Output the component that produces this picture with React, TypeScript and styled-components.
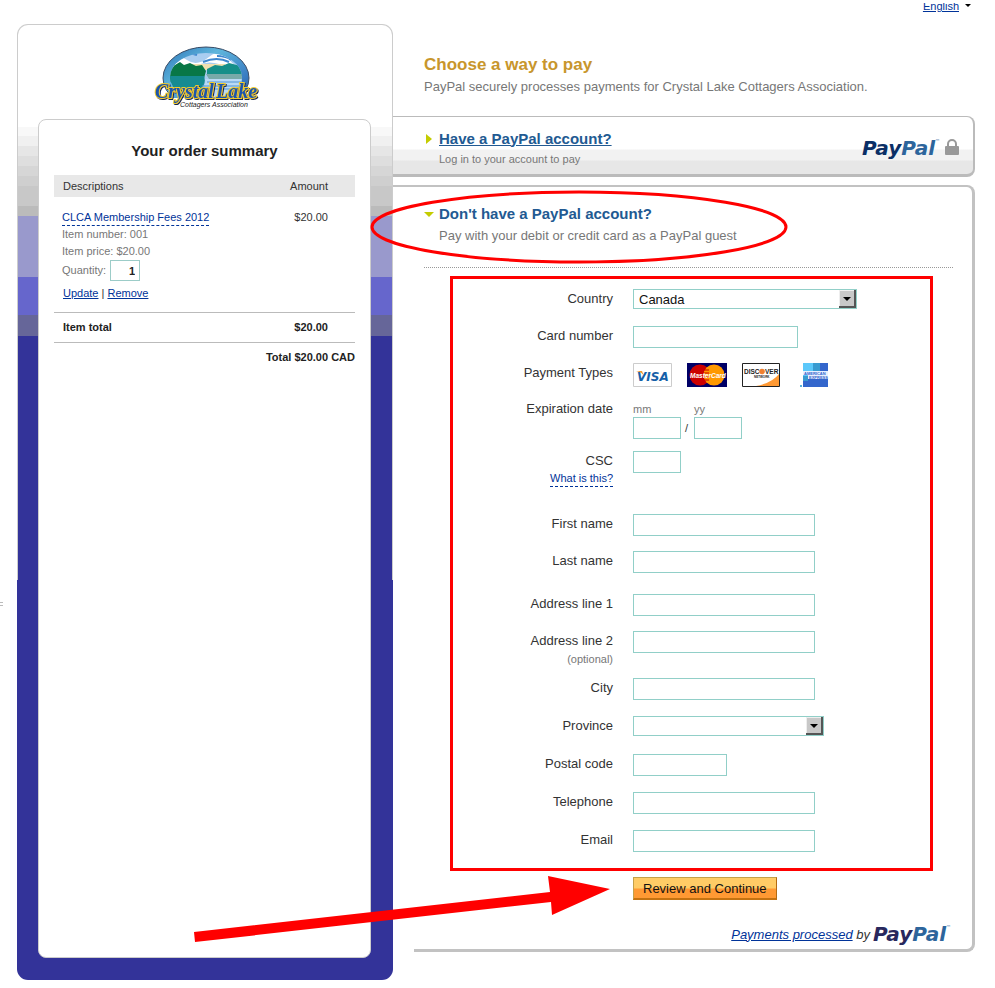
import React from 'react';
import styled, { createGlobalStyle } from 'styled-components';

const GlobalStyle = createGlobalStyle`
  * { box-sizing: border-box; }
  body {
    margin: 0;
    background: #fff;
    color: #333;
    font-family: "Liberation Sans", Arial, sans-serif;
    font-size: 13px;
  }
  input, select, button { font: inherit; color: inherit; border-radius: 0; }
  h1, h2, p { margin: 0; }
`;

const Page = styled.div`
  position: relative;
  padding: 3px 20px 10px 17px;
`;

const TopBar = styled.header`
  display: flex;
  justify-content: flex-end;
  align-items: flex-end;
  height: 9px;
  margin-bottom: 12px;
  overflow: hidden;
`;

const Language = styled.a`
  display: flex;
  align-items: center;
  gap: 6px;
  margin-right: 4px;
  color: #039;
  font-size: 11px;
  line-height: 12px;
`;

const Columns = styled.div`
  display: flex;
  align-items: stretch;
`;

const Sidebar = styled.aside`
  display: flex;
  flex-direction: column;
  flex: none;
  width: 376px;
  padding: 20px 21px 21px 20px;
  border: 1px solid transparent;
  border-radius: 11px;
  background:
    linear-gradient(
      to bottom,
      #fff 0 102px, #f8f8f8 102px 111px, #f0f0f0 111px 121px, #e6e6e6 121px 131px,
      #dedede 131px 141px, #d6d6d6 141px 151px, #cfcfcf 151px 161px, #c8c8c8 161px 181px,
      #bbb 181px 191px, #99c 191px 252px, #66c 252px 290px, #669 290px 311px, #339 311px
    ) padding-box,
    linear-gradient(to bottom, #ccc 0 556px, #339 556px) border-box;
`;

const BrandLogo = styled.svg`
  display: block;
  align-self: center;
  width: 108px;
  height: 68px;
  margin-bottom: 6px;
  margin-left: 4px;
`;

const Summary = styled.section`
  flex: 1;
  padding: 22px 15px 20px;
  border: 1px solid #ccc;
  border-radius: 8px;
  background: #fff;
`;

const SummaryTitle = styled.h2`
  margin-bottom: 15px;
  text-align: center;
  color: #222;
  font-size: 15px;
  line-height: 18px;
`;

const OrderTable = styled.table`
  width: 100%;
  border-collapse: collapse;
  font-size: 11px;
  line-height: 17px;

  th, td { padding: 0; text-align: left; vertical-align: top; }
  th:last-child, td:last-child { text-align: right; padding-right: 27px; }
  thead th { background: #e8e8e8; font-weight: normal; line-height: 22px; }
  thead th:first-child, tfoot th:first-child { padding-left: 9px; }
  tbody td { padding-top: 12px; }
  tbody td:first-child { padding: 12px 0 7px 8px; }
  tfoot th, tfoot td {
    height: 30px;
    border-top: 1px solid #bbb;
    font-weight: bold;
    line-height: 29px;
    color: #222;
  }
  tfoot tr:last-child td { padding-right: 0; }
`;

const Detail = styled.div`
  display: flex;
  align-items: center;
  gap: 4px;
  color: #777;
`;

const DashedLink = styled.a`
  display: inline-block;
  color: #039;
  text-decoration: none;
  font-size: 11px;
  line-height: 15px;
  border-bottom: 1px dashed #039;
`;

const QuantityInput = styled.input`
  width: 30px;
  height: 21px;
  padding: 0 4px;
  border: 1px solid #9cccc8;
  background: #fff;
  color: #222;
  font-weight: bold;
  text-align: right;
`;

const Actions = styled.div`
  padding-left: 1px;
  line-height: 24px;
  a { color: #039; }
`;

const Main = styled.main`
  flex: 1;
  min-width: 0;
  margin-bottom: 28px;
`;

const Intro = styled.div`
  padding: 30px 31px 19px;
`;

const Title = styled.h1`
  color: #c8962c;
  font-size: 17px;
  line-height: 22px;
`;

const Muted = styled.p<{ $small?: boolean }>`
  color: #777;
  font-size: ${(p) => (p.$small ? 11 : 13)}px;
  line-height: ${(p) => (p.$small ? 18 : 21)}px;
`;

const LoginBar = styled.section`
  display: flex;
  align-items: center;
  justify-content: space-between;
  height: 61px;
  margin-bottom: 8px;
  padding: 4px 14px 0 31px;
  border: solid #bbb;
  border-width: 1px 2px 3px 0;
  border-radius: 0 8px 8px 0;
  background: linear-gradient(to bottom, #fff 0 32px, #f2f2f2 33px 43px, #e7e7e7 44px);
`;

const Option = styled.div`
  display: grid;
  grid-template-columns: 15px auto;
  align-items: center;
`;

const OptionTitle = styled.h2`
  color: #225a92;
  font-size: 15px;
  line-height: 22px;
  a { color: inherit; }
`;

const OptionText = styled.div`
  grid-column: 2;
`;

const LogoRow = styled.div`
  display: flex;
  align-items: center;
  gap: 5px;
`;

const PayPalMark = styled.span<{ $first: string }>`
  display: inline-flex;
  color: ${(p) => p.$first};
  font-family: "DejaVu Sans", Verdana, sans-serif;
  font-size: 20px;
  font-style: italic;
  font-weight: bold;
  line-height: 26px;
  b { color: #2d659c; }
  sup { color: #2d659c; font-size: 5px; line-height: 12px; font-weight: 400; font-style: normal; }
`;

const GuestPanel = styled.section`
  position: relative;
  border: solid #c2c2c2;
  border-width: 2px 3px 0 0;
  border-radius: 0 8px 0 0;
`;

const GuestHead = styled.div`
  margin: 0 19px 8px 31px;
  padding: 16px 0 21px;
  border-bottom: 1px dotted #999;
`;

const HighlightRing = styled.svg`
  position: absolute;
  top: 1px;
  left: -24px;
  width: 420px;
  height: 76px;
  pointer-events: none;
`;

const HighlightArrow = styled.svg`
  position: absolute;
  left: -203px;
  bottom: -45px;
  width: 424px;
  height: 76px;
  pointer-events: none;
`;

const PaymentForm = styled.form`
  display: block;
`;

const FormBox = styled.div`
  margin: 0 39px 6px 57px;
  padding: 10px 0 1px;
  border: 3px solid #f00;
`;

const Group = styled.div<{ $after?: number; $gap?: number }>`
  display: grid;
  row-gap: ${(p) => p.$gap ?? 0}px;
  margin-bottom: ${(p) => p.$after ?? 0}px;
`;

const Row = styled.div`
  display: grid;
  grid-template-columns: 160px 1fr;
  column-gap: 20px;
  align-items: start;
  min-height: 37px;
`;

const LabelCell = styled.div`
  display: flex;
  flex-direction: column;
  align-items: flex-end;
`;

const FieldLabel = styled.label<{ $tight?: boolean }>`
  line-height: ${(p) => (p.$tight ? 14 : 20)}px;
`;

const Optional = styled.small`
  color: #777;
  font-size: 11px;
  line-height: 16px;
`;

const TextInput = styled.input<{ $width: number }>`
  width: ${(p) => p.$width}px;
  max-width: 100%;
  height: 22px;
  padding: 0 4px;
  border: 1px solid #91cfc8;
  background: #fff;
`;

const SelectWrap = styled.div<{ $width: number }>`
  display: grid;
  align-items: center;
  justify-items: end;
  width: ${(p) => p.$width}px;
  max-width: 100%;
  > * { grid-area: 1 / 1; }
`;

const Select = styled.select`
  width: 100%;
  height: 20px;
  padding: 0 20px 0 5px;
  border: 1px solid #91cfc8;
  background: #fff;
  color: #111;
  appearance: none;
`;

const SelectArrow = styled.svg`
  width: 17px;
  height: 18px;
  margin-right: 1px;
  pointer-events: none;
`;

const Cards = styled.div`
  display: flex;
  gap: 15px;
  svg { display: block; height: 24px; }
`;

const DateFields = styled.div`
  display: flex;
  align-items: flex-end;
  gap: 4px;
`;

const DateField = styled.label`
  display: grid;
  color: #777;
  font-size: 11px;
  line-height: 15px;
`;

const Slash = styled.span`
  width: 5px;
  font-size: 11px;
  line-height: 22px;
`;

const SubmitButton = styled.button`
  display: block;
  height: 23px;
  margin-left: 240px;
  padding: 0 9px;
  border: 1px solid #c4a14a;
  border-right-color: #b26b12;
  border-bottom: 2px solid #c47210;
  background: linear-gradient(to bottom, #fc6 0 10px, #f93 11px);
  color: #111;
  cursor: pointer;
`;

const PanelFoot = styled.footer`
  display: flex;
  justify-content: flex-end;
  align-items: center;
  gap: 3px;
  margin-left: 21px;
  padding: 21px 21px 2px 0;
  border: solid #c2c2c2;
  border-width: 0 3px 3px 0;
  border-radius: 0 0 8px 0;
  font-style: italic;
  a { color: #039; }
`;

const EdgeMark = styled.span`
  position: absolute;
  left: 0;
  top: 602px;
  width: 3px;
  height: 4px;
  border: solid #bbb;
  border-width: 1px 0;
`;

const PayPal = ({ first = '#0b2f66' }: { first?: string }) => (
  <PayPalMark $first={first}>
    Pay<b>Pal</b><sup>™</sup>
  </PayPalMark>
);

const scriptFont = {
  fontFamily: 'Liberation Serif, serif',
  fontSize: 20,
  fontStyle: 'italic',
  fontWeight: 'bold',
  fill: '#1c54ac',
  stroke: '#f2cb2c',
  strokeWidth: 2,
  paintOrder: 'stroke',
} as const;

const CrystalLogo = () => (
  <BrandLogo viewBox="0 0 108 68" role="img" aria-label="Crystal Lake Cottagers Association">
    <defs>
      <clipPath id="lake"><ellipse cx="53" cy="32" rx="36" ry="24" /></clipPath>
      <clipPath id="frame"><path d="M0 0h108v53H0z" /></clipPath>
      <linearGradient id="ring" x1="0" y1="0" x2="1" y2="1">
        <stop offset="0" stopColor="#2a72b8" />
        <stop offset=".35" stopColor="#5fb6dc" />
        <stop offset=".7" stopColor="#3b7fc4" />
        <stop offset="1" stopColor="#234f94" />
      </linearGradient>
      <filter id="edge" x="-10%" y="-20%" width="120%" height="150%">
        <feDropShadow dx="1" dy="1" stdDeviation="0" floodColor="#16264f" />
      </filter>
    </defs>
    <g clipPath="url(#frame)">
      <ellipse cx="53" cy="33" rx="43" ry="31" fill="url(#ring)" stroke="#3a4c66" />
      <g clipPath="url(#lake)">
        <rect width="108" height="60" fill="#a9cdf0" />
        <path d="M10 15q14-7 24 0t22-3 20 2 16 0v4q-14 5-26 1t-24 2-32-1z" fill="#fff" />
        <path d="M20 11q14-5 24-1M50 17q14-6 26 0M64 11q10 0 14 4" stroke="#3f88cf" strokeWidth="2" fill="none" />
        <path d="M36 19h36v6H36z" fill="#f1dfae" />
        <path d="M10 22l8-4 4 2 5-3 4 3 6-2 6 3 6-1 4 6-3 11H10z" fill="#087746" />
        <path d="M54 24l8-4 7 1 7-3 8 2 8 1v10H54z" fill="#168f89" />
        <path d="M53 29h40v5H56z" fill="#78aaa9" />
        <path d="M10 31h41q3 9-5 14-8 4-36 2z" fill="#168b91" />
        <path d="M52 34h40v20H44q10-12 8-20z" fill="#badaf5" />
        <path d="M54 37h34M49 41h40M59 44h30" stroke="#5394d4" />
      </g>
    </g>
    <g filter="url(#edge)">
      <text x="2" y="53" {...scriptFont}>Crystal</text>
      <text x="63" y="53" {...scriptFont}>Lake</text>
    </g>
    <text x="27" y="62" fontFamily="Liberation Sans, sans-serif" fontSize="7" fontStyle="italic" fill="#222">Cottagers Association</text>
  </BrandLogo>
);

const DropArrow = () => (
  <SelectArrow viewBox="0 0 17 18" aria-hidden="true">
    <path d="M0 0h17v18H0z" fill="#555" />
    <path d="M0 0h15v16H0z" fill="#eee" />
    <path d="M1 1h14v15H1z" fill="#c8c8c8" />
    <path d="M4 7h8l-4 4z" fill="#000" />
  </SelectArrow>
);

const PaymentTypes = () => (
  <Cards>
    <svg width="39" viewBox="0 0 39 24" role="img" aria-label="Visa">
      <path d="M.5.5h38v23H.5z" fill="#fff" stroke="#ccc" />
      <text x="4" y="18" fontFamily="DejaVu Sans, sans-serif" fontStyle="italic" fontWeight="bold" fontSize="12" fill="#1560a8">VISA</text>
      <path d="M3 8h6l2 5q-2-4-8-5z" fill="#f39a2b" />
    </svg>
    <svg width="40" viewBox="0 0 40 24" role="img" aria-label="MasterCard">
      <path d="M0 0h40v24H0z" fill="#006" />
      <circle cx="13" cy="12" r="10.5" fill="#c00" />
      <circle cx="27" cy="12" r="10.5" fill="#f90" />
      <path d="M17 7h5M17 10h5M17 14h5M17 17h5" stroke="#c00" />
      <text x="3" y="15" fontFamily="Liberation Sans, sans-serif" fontStyle="italic" fontWeight="bold" fontSize="6.5" fill="#fff">MasterCard</text>
    </svg>
    <svg width="38" viewBox="0 0 38 24" role="img" aria-label="Discover Network">
      <path d="M.5.5h37v23H.5z" fill="#fff" />
      <path d="M14 23q16-3 23-12v12z" fill="#f93" />
      <path d="M.5.5h37v23H.5z" fill="none" stroke="#222" />
      <text x="2" y="11" fontFamily="Liberation Sans, sans-serif" fontWeight="bold" fontSize="6.5" fill="#222">DISC</text>
      <circle cx="20" cy="8.500" r="2.800" fill="#f08030" />
      <text x="23" y="11" fontFamily="Liberation Sans, sans-serif" fontWeight="bold" fontSize="6.5" fill="#222">VER</text>
      <text x="12" y="15" fontFamily="Liberation Sans, sans-serif" fontWeight="bold" fontSize="3" fill="#222">NETWORK</text>
    </svg>
    <svg width="34" viewBox="0 0 34 24" role="img" aria-label="American Express">
      <path d="M8 0h25v24H8z" fill="#36c" />
      <path d="M8 0h10v16H8z" fill="#5cc8fa" />
      <path d="M18 0h7v8h-7zM8 13h5v5H8z" fill="#399bd0" />
      <path d="M8 8h25v4H8zM13 12h20v4H13z" fill="#e8f0ff" />
      <text x="9" y="12" fontFamily="Liberation Sans, sans-serif" fontWeight="bold" fontSize="4" fill="#36c">AMERICAN</text>
      <text x="14" y="16" fontFamily="Liberation Sans, sans-serif" fontWeight="bold" fontSize="4" fill="#36c">EXPRESS</text>
      <circle cx="6" cy="23" r="1" fill="#29c" />
    </svg>
  </Cards>
);

type FieldProps = { id: string; label: string; width: number; type?: string; optional?: boolean };

const Field = ({ id, label, width, type = 'text', optional }: FieldProps) => (
  <Row>
    <LabelCell>
      <FieldLabel htmlFor={id}>{label}</FieldLabel>
      {optional && <Optional>(optional)</Optional>}
    </LabelCell>
    <TextInput id={id} type={type} $width={width} />
  </Row>
);

const OrderSummary = () => (
  <Summary>
    <SummaryTitle>Your order summary</SummaryTitle>
    <OrderTable>
      <thead>
        <tr><th scope="col">Descriptions</th><th scope="col">Amount</th></tr>
      </thead>
      <tbody>
        <tr>
          <td>
            <DashedLink href="#item">CLCA Membership Fees 2012</DashedLink>
            <Detail>Item number: 001</Detail>
            <Detail>Item price: $20.00</Detail>
            <Detail>
              <label htmlFor="quantity">Quantity:</label>
              <QuantityInput id="quantity" defaultValue="1" />
            </Detail>
            <Actions><a href="#update">Update</a> | <a href="#remove">Remove</a></Actions>
          </td>
          <td>$20.00</td>
        </tr>
      </tbody>
      <tfoot>
        <tr><th scope="row">Item total</th><td>$20.00</td></tr>
        <tr><td colSpan={2}>Total $20.00 CAD</td></tr>
      </tfoot>
    </OrderTable>
  </Summary>
);

export default function App() {
  return (
    <Page>
      <GlobalStyle />
      <TopBar>
        <Language href="#language">
          English
          <svg width="6" height="4" viewBox="0 0 6 4" aria-hidden="true"><path d="M0 0h6L3 3z" fill="#000" /></svg>
        </Language>
      </TopBar>
      <Columns>
        <Sidebar>
          <CrystalLogo />
          <OrderSummary />
        </Sidebar>
        <Main>
          <Intro>
            <Title>Choose a way to pay</Title>
            <Muted>PayPal securely processes payments for Crystal Lake Cottagers Association.</Muted>
          </Intro>
          <LoginBar>
            <Option>
              <svg width="8" height="10" viewBox="0 0 8 10" aria-hidden="true"><path d="M2 0l6 5-6 5z" fill="#c4cc00" /></svg>
              <OptionTitle><a href="#login">Have a PayPal account?</a></OptionTitle>
              <OptionText><Muted $small>Log in to your account to pay</Muted></OptionText>
            </Option>
            <LogoRow>
              <PayPal />
              <svg width="14" height="17" viewBox="0 0 14 17" aria-hidden="true">
                <path d="M3 8V5a4 4 0 0 1 8 0v3" fill="none" stroke="#999" strokeWidth="2" />
                <rect y="7" width="14" height="9" rx="1" fill="#999" />
              </svg>
            </LogoRow>
          </LoginBar>
          <GuestPanel>
            <GuestHead>
              <Option>
                <svg width="10" height="5" viewBox="0 0 10 5" aria-hidden="true"><path d="M0 0h10L5 5z" fill="#c4cc00" /></svg>
                <OptionTitle>Don't have a PayPal account?</OptionTitle>
                <OptionText><Muted>Pay with your debit or credit card as a PayPal guest</Muted></OptionText>
              </Option>
            </GuestHead>
            <PaymentForm>
              <FormBox>
                <Group $after={2}>
                  <Row>
                    <LabelCell><FieldLabel htmlFor="country">Country</FieldLabel></LabelCell>
                    <SelectWrap $width={224}>
                      <Select id="country" defaultValue="Canada"><option>Canada</option></Select>
                      <DropArrow />
                    </SelectWrap>
                  </Row>
                  <Field id="card" label="Card number" width={165} />
                  <Row>
                    <LabelCell><FieldLabel as="span">Payment Types</FieldLabel></LabelCell>
                    <PaymentTypes />
                  </Row>
                </Group>
                <Group $after={12}>
                  <Row>
                    <LabelCell><FieldLabel as="span" $tight>Expiration date</FieldLabel></LabelCell>
                    <DateFields>
                      <DateField>mm<TextInput $width={48} /></DateField>
                      <Slash>/</Slash>
                      <DateField>yy<TextInput $width={48} /></DateField>
                    </DateFields>
                  </Row>
                </Group>
                <Group $after={26}>
                  <Row>
                    <LabelCell>
                      <FieldLabel htmlFor="csc">CSC</FieldLabel>
                      <DashedLink href="#csc-help">What is this?</DashedLink>
                    </LabelCell>
                    <TextInput id="csc" $width={48} />
                  </Row>
                </Group>
                <Group $after={6}>
                  <Field id="first" label="First name" width={182} />
                  <Field id="last" label="Last name" width={182} />
                </Group>
                <Group $after={10}>
                  <Field id="address1" label="Address line 1" width={182} />
                  <Field id="address2" label="Address line 2" width={182} optional />
                </Group>
                <Group $gap={1}>
                  <Field id="city" label="City" width={182} />
                  <Row>
                    <LabelCell><FieldLabel htmlFor="province">Province</FieldLabel></LabelCell>
                    <SelectWrap $width={191}>
                      <Select id="province" defaultValue=""><option value="" /></Select>
                      <DropArrow />
                    </SelectWrap>
                  </Row>
                  <Field id="postal" label="Postal code" width={94} />
                  <Field id="phone" label="Telephone" width={182} type="tel" />
                  <Field id="email" label="Email" width={182} type="email" />
                </Group>
              </FormBox>
              <SubmitButton type="button">Review and Continue</SubmitButton>
            </PaymentForm>
            <HighlightRing viewBox="0 0 420 76" aria-hidden="true">
              <ellipse cx="210" cy="39" rx="207" ry="35" fill="none" stroke="#f00" strokeWidth="3" />
            </HighlightRing>
            <HighlightArrow viewBox="0 0 424 76" aria-hidden="true">
              <path d="M4 63L360 23 358 7 420 20 362 46 361 33 5 73z" fill="#f00" />
            </HighlightArrow>
          </GuestPanel>
          <PanelFoot>
            <span><a href="#payments">Payments processed</a> by</span>
            <PayPal first="#28285e" />
          </PanelFoot>
        </Main>
      </Columns>
      <EdgeMark aria-hidden="true" />
    </Page>
  );
}
